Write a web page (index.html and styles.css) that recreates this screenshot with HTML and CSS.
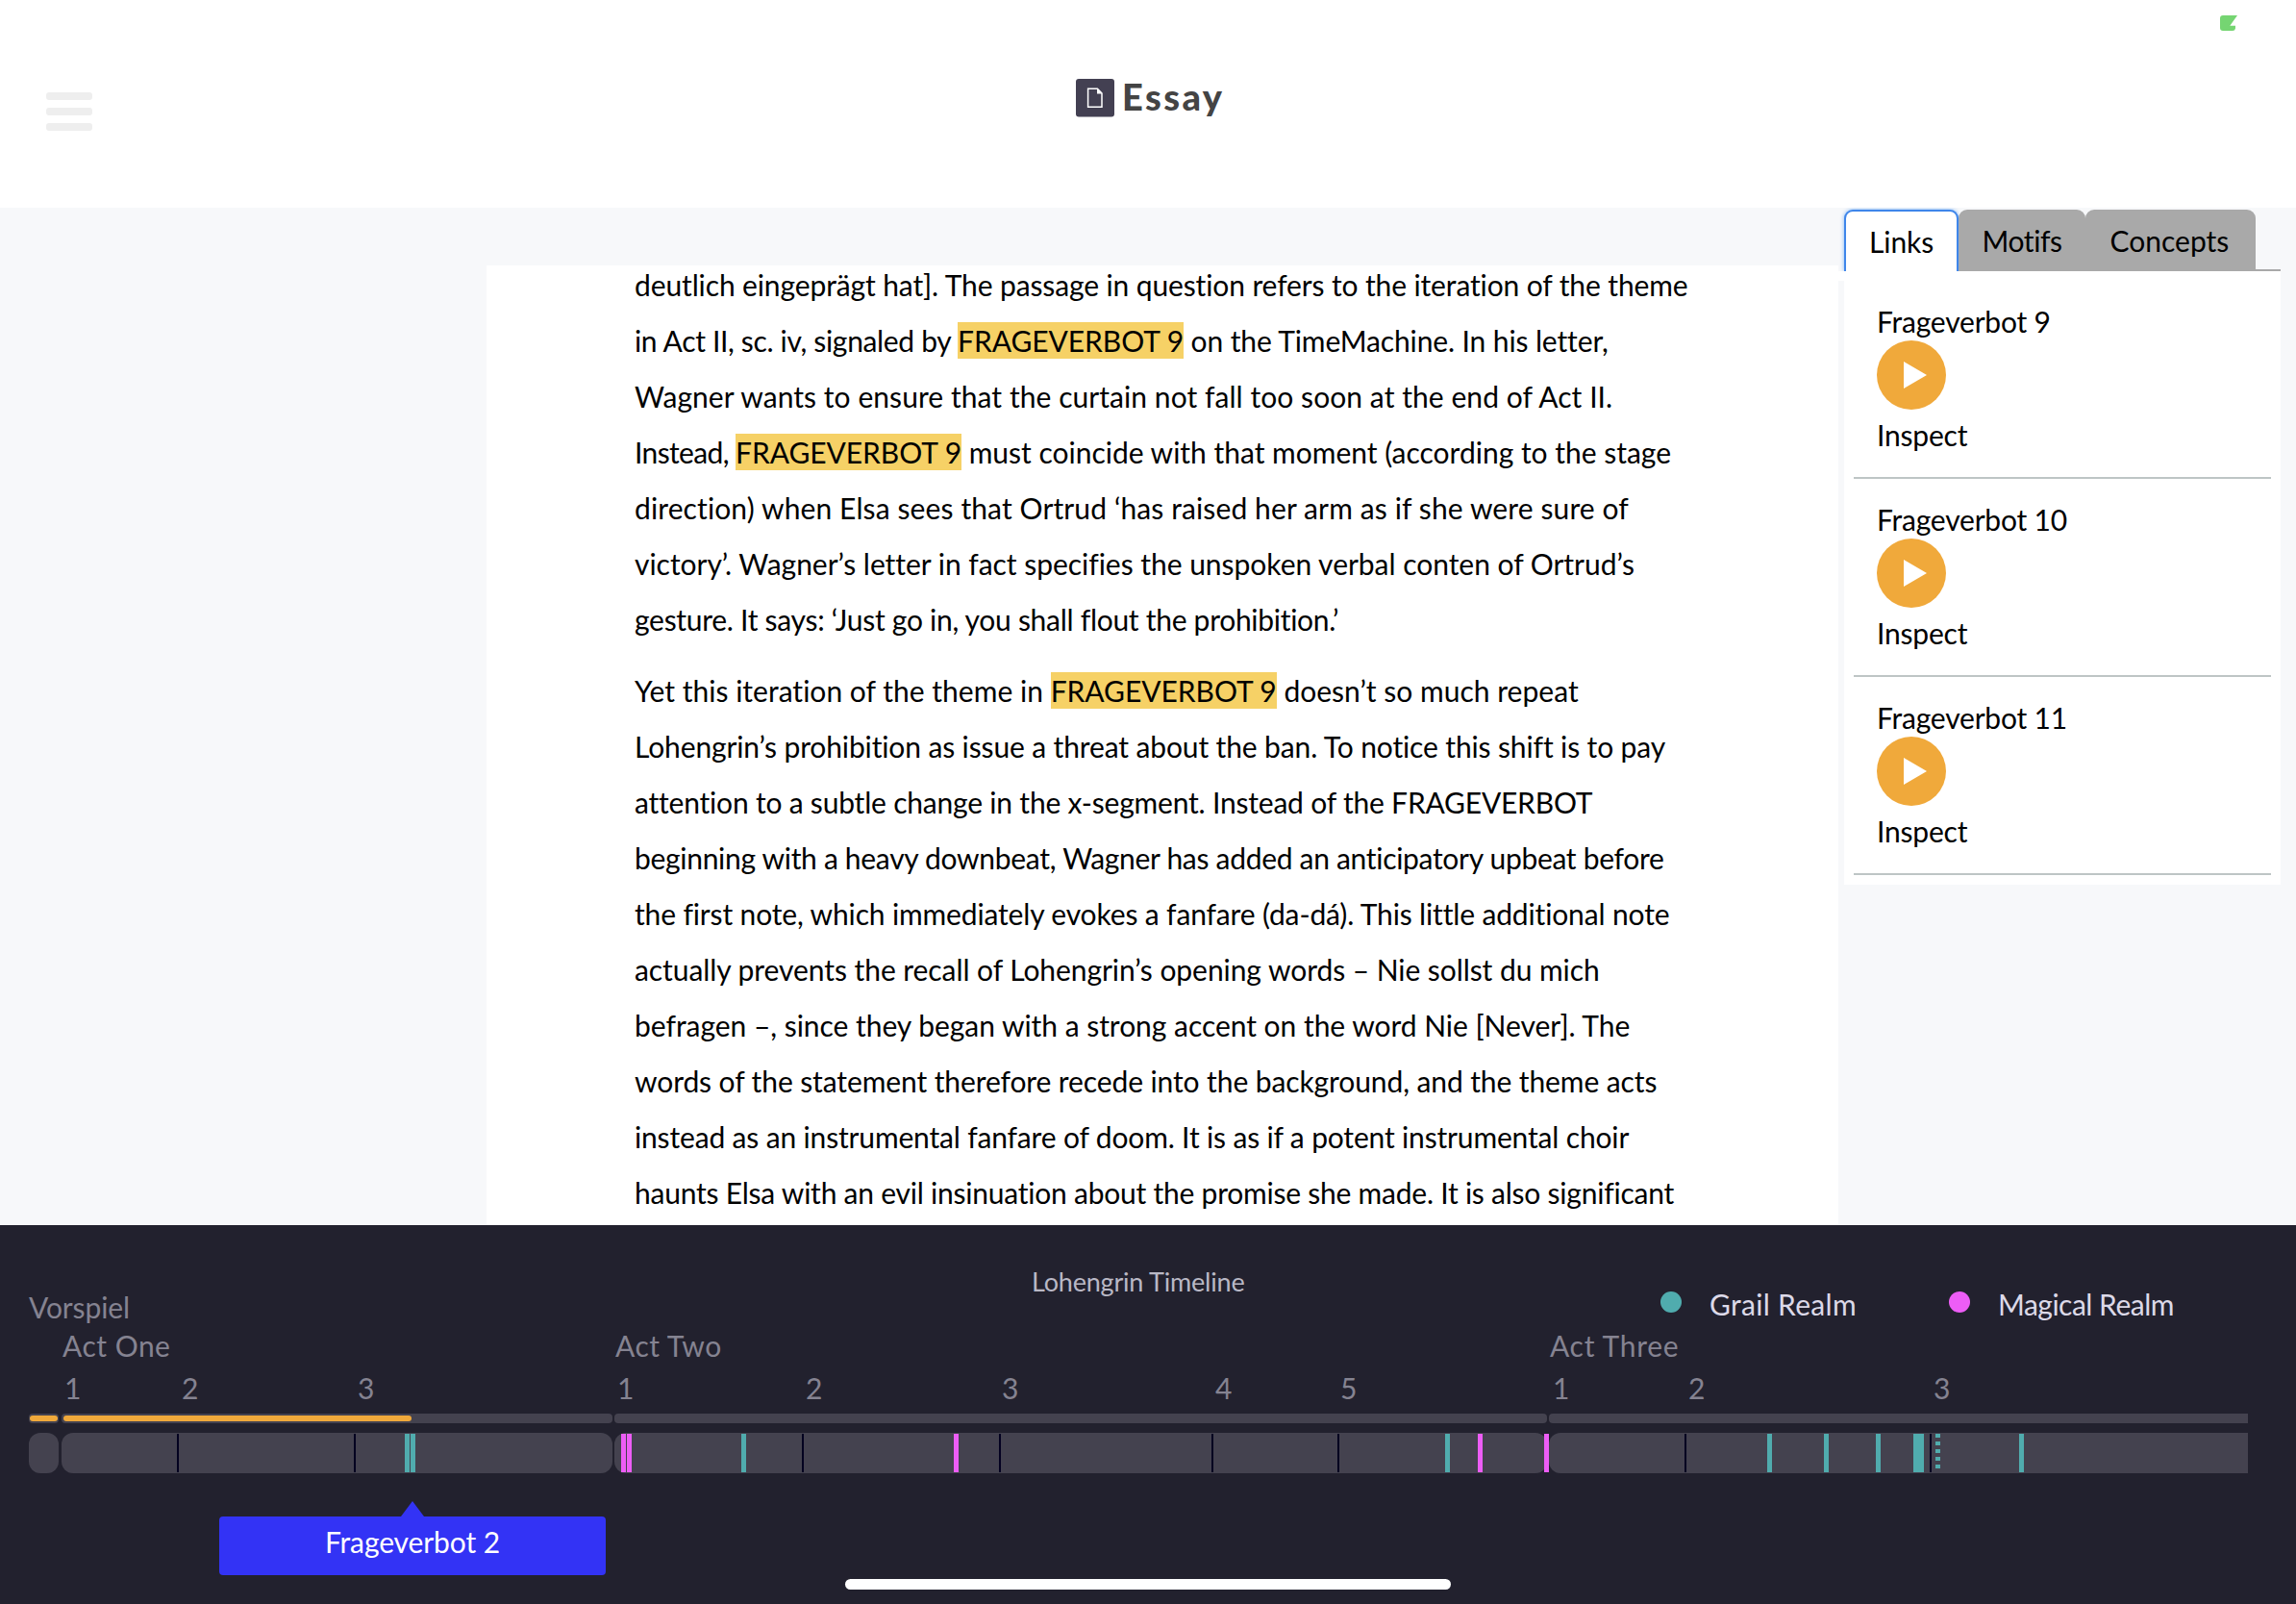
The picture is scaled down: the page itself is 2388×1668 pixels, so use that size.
FILE: index.html
```html
<!DOCTYPE html>
<html lang="en">
<head>
<meta charset="utf-8">
<title>Essay</title>
<link rel="stylesheet" href="styles.css">
</head>
<body>
<div class="app">
  <header class="topbar">
    <button class="menu" aria-label="Menu"><i></i><i></i><i></i></button>
    <h1 class="title">
      <svg class="doc" viewBox="0 0 40 40" width="40" height="40"><rect width="40" height="39.5" rx="3" fill="#434052"/><path d="M12.6 10.3H22.4L27 15V29.3H12.6Z" fill="none" stroke="#fff" stroke-width="1.5"/><path d="M22 10V15.4H27.4Z" fill="#fff"/></svg>
      <span>Essay</span>
    </h1>
    <svg class="battery" viewBox="0 0 18 16" width="18" height="16"><path d="M3 0H18L10.3 10.8H16V13.5Q15.5 16 13 16H3Q0 16 0 13V3Q0 0 3 0Z" fill="#75d572"/></svg>
  </header>

  <main class="content">
    <article class="paper">
      <p class="first">
        <span class="line">deutlich eingeprägt hat]. The passage in question refers to the iteration of the theme</span>
        <span class="line"><span>in Act II, sc. iv, signaled by </span><mark>FRAGEVERBOT 9</mark><span class="rest"> on the TimeMachine. In his letter,</span></span>
        <span class="line">Wagner wants to ensure that the curtain not fall too soon at the end of Act II.</span>
        <span class="line"><span>Instead, </span><mark>FRAGEVERBOT 9</mark><span class="rest"> must coincide with that moment (according to the stage</span></span>
        <span class="line">direction) when Elsa sees that Ortrud ‘has raised her arm as if she were sure of</span>
        <span class="line">victory’. Wagner’s letter in fact specifies the unspoken verbal conten of Ortrud’s</span>
        <span class="line">gesture. It says: ‘Just go in, you shall flout the prohibition.’</span>
      </p>
      <p class="second">
        <span class="line"><span>Yet this iteration of the theme in </span><mark>FRAGEVERBOT 9</mark><span class="rest"> doesn’t so much repeat</span></span>
        <span class="line">Lohengrin’s prohibition as issue a threat about the ban. To notice this shift is to pay</span>
        <span class="line">attention to a subtle change in the x-segment. Instead of the FRAGEVERBOT</span>
        <span class="line">beginning with a heavy downbeat, Wagner has added an anticipatory upbeat before</span>
        <span class="line">the first note, which immediately evokes a fanfare (da-dá). This little additional note</span>
        <span class="line">actually prevents the recall of Lohengrin’s opening words – Nie sollst du mich</span>
        <span class="line">befragen –, since they began with a strong accent on the word Nie [Never]. The</span>
        <span class="line">words of the statement therefore recede into the background, and the theme acts</span>
        <span class="line">instead as an instrumental fanfare of doom. It is as if a potent instrumental choir</span>
        <span class="line">haunts Elsa with an evil insinuation about the promise she made. It is also significant</span>
      </p>
    </article>

    <aside class="side">
      <nav class="tabs">
        <button class="tab active">Links</button>
        <button class="tab motifs">Motifs</button>
        <button class="tab concepts">Concepts</button>
      </nav>
      <div class="panel">
        <section class="item">
          <h2>Frageverbot 9</h2>
          <svg class="play" viewBox="0 0 72 72" width="72" height="72"><circle cx="36" cy="36" r="36" fill="#f0a93b"/><path d="M28 22V50L52 36Z" fill="#fff"/></svg>
          <a>Inspect</a>
        </section>
        <section class="item">
          <h2>Frageverbot 10</h2>
          <svg class="play" viewBox="0 0 72 72" width="72" height="72"><circle cx="36" cy="36" r="36" fill="#f0a93b"/><path d="M28 22V50L52 36Z" fill="#fff"/></svg>
          <a>Inspect</a>
        </section>
        <section class="item">
          <h2>Frageverbot 11</h2>
          <svg class="play" viewBox="0 0 72 72" width="72" height="72"><circle cx="36" cy="36" r="36" fill="#f0a93b"/><path d="M28 22V50L52 36Z" fill="#fff"/></svg>
          <a>Inspect</a>
        </section>
      </div>
    </aside>
  </main>

  <footer class="timeline">
    <div class="timeline-head">
      <span class="vorspiel">Vorspiel</span>
      <h3>Lohengrin Timeline</h3>
      <ul class="legend">
        <li class="grail">Grail Realm</li>
        <li class="magical">Magical Realm</li>
      </ul>
    </div>
    <div class="grid acts">
      <span></span><span>Act One</span><span>Act Two</span><span class="wide">Act Three</span>
    </div>
    <div class="scenes">
      <span style="left:67px">1</span><span style="left:189px">2</span><span style="left:372px">3</span>
      <span style="left:642px">1</span><span style="left:838px">2</span><span style="left:1042px">3</span><span style="left:1264px">4</span><span style="left:1394px">5</span>
      <span style="left:1615px">1</span><span style="left:1756px">2</span><span style="left:2011px">3</span>
    </div>
    <div class="grid progress">
      <span><b style="width:29px"></b></span><span><b style="width:362px"></b></span><span></span><span></span>
    </div>
    <div class="grid track">
      <span></span><span></span><span></span><span></span>
      <i class="cut" style="left:184px"></i><i class="cut" style="left:368px"></i>
      <i class="teal" style="left:421px"></i><i class="teal" style="left:426.5px"></i>
      <i class="pink" style="left:646px"></i><i class="pink" style="left:652px"></i>
      <i class="teal" style="left:770.5px"></i><i class="cut" style="left:834px"></i>
      <i class="pink" style="left:991.5px"></i><i class="cut" style="left:1039px"></i>
      <i class="cut" style="left:1260px"></i><i class="cut" style="left:1391px"></i>
      <i class="teal" style="left:1503px"></i><i class="pink" style="left:1537px"></i><i class="pink" style="left:1606px"></i>
      <i class="cut" style="left:1752px"></i>
      <i class="teal" style="left:1838px"></i><i class="teal" style="left:1896.5px"></i><i class="teal" style="left:1950.5px"></i>
      <i class="teal" style="left:1990px;width:11px"></i>
      <i class="cut" style="left:2007px"></i><i class="dots" style="left:2013px"></i>
      <i class="teal" style="left:2100px"></i>
    </div>
    <div class="tip">Frageverbot 2</div>
    <div class="home"></div>
  </footer>
</div>
</body>
</html>
```
FILE: styles.css
```css
* { box-sizing: border-box; }
body { margin: 0; font-family: "Gill Sans", Lato, sans-serif; font-size: 30px; line-height: 36px; font-variant-ligatures: none; color: #000; background: #f7f8fa; }
button { font: inherit; color: inherit; border: 0; padding: 0; background: none; }
h1, h2, h3, ul { margin: 0; padding: 0; font: inherit; list-style: none; }
.app { display: flex; flex-direction: column; width: 2388px; height: 1668px; overflow: hidden; }

/* Header */
.topbar { flex: none; display: flex; align-items: flex-start; height: 216px; background: #fff; }
.menu { display: flex; flex-direction: column; gap: 8px; margin: 96px 0 0 48px; }
.menu i { width: 48px; height: 8px; border-radius: 3px; background: #eee; }
.title { display: flex; gap: 8px; margin: 82px 0 0 1023px; font-size: 38px; line-height: 40px; font-weight: 900; letter-spacing: 2.4px; color: #444; }
.title span { margin-top: -2px; }
.battery { margin: 16px 61px 0 auto; }

/* Essay */
.content { flex: none; display: flex; align-items: flex-start; height: 1058px; overflow: hidden; }
.paper { flex: none; width: 1406px; height: 998px; margin: 60px 0 0 506px; padding-left: 154px; background: #fff; overflow: hidden; }
.paper p { margin: -9px 0 25px; }
.line { display: block; height: 58px; line-height: 58px; white-space: pre; }
mark { padding: 1px 0; background: #f6d166; color: inherit; letter-spacing: -0.04px; }

.first .line:nth-child(1) { letter-spacing: -0.12px; }
.first .line:nth-child(2) { letter-spacing: -0.336px; }
.first .line:nth-child(2) .rest { letter-spacing: -0.12px; }
.first .line:nth-child(3) { letter-spacing: 0.06px; }
.first .line:nth-child(4) { letter-spacing: -0.627px; }
.first .line:nth-child(4) .rest { letter-spacing: -0.01px; }
.first .line:nth-child(5) { letter-spacing: 0.112px; }
.first .line:nth-child(6) { letter-spacing: -0.03px; }
.first .line:nth-child(7) { letter-spacing: -0.283px; }
.second .line:nth-child(1) { letter-spacing: 0.02px; }
.second .line:nth-child(2) { letter-spacing: -0.128px; }
.second .line:nth-child(3) { letter-spacing: -0.2px; }
.second .line:nth-child(4) { letter-spacing: -0.305px; }
.second .line:nth-child(5) { letter-spacing: -0.144px; }
.second .line:nth-child(6) { letter-spacing: -0.065px; }
.second .line:nth-child(7) { letter-spacing: -0.035px; }
.second .line:nth-child(8) { letter-spacing: -0.1px; }
.second .line:nth-child(9) { letter-spacing: -0.16px; }
.second .line:nth-child(10) { letter-spacing: -0.23px; }
.paper .line mark { letter-spacing: -0.04px; }

/* Side panel */
.side { flex: none; width: 454px; margin: 2px 0 0 6px; }
.tabs { display: flex; height: 64px; border-bottom: 2px solid #a9a9a9; }
.tab { height: 64px; line-height: 64px; border-radius: 9px 9px 0 0; background: #a9a9a9; text-align: left; }
.active { width: 118.5px; padding-left: 24px; line-height: 60px; letter-spacing: -0.1px; border: 2px solid #3f86ea; border-bottom: 0; background: #fff; box-shadow: 0 0 4px #7db4f5; clip-path: inset(-6px -1px 0 -6px); }
.motifs { width: 132px; padding-left: 25px; letter-spacing: -0.4px; }
.concepts { width: 177.5px; padding-left: 26px; }
.panel { position: relative; padding: 10px; background: #fff; }
.panel::before { content: ""; position: absolute; left: -6px; top: 0; width: 6px; height: 10px; background: #fff; }
.item { display: flex; flex-direction: column; height: 206px; padding: 24px 0 0 24px; border-bottom: 2px solid #bec5c5; letter-spacing: -0.2px; }
.play { display: block; margin: 2px 0 8px; }

/* Timeline */
.timeline { position: relative; flex: none; height: 394px; background: #22212e; color: #858391; }
.timeline-head { display: flex; align-items: flex-start; height: 107px; }
.vorspiel { width: 1043px; margin: 67px 0 0 30px; letter-spacing: -0.1px; }
.timeline-head h3 { width: 654px; margin-top: 41px; font-size: 27px; letter-spacing: -0.2px; color: #b9b8c5; }
.legend { display: flex; margin-top: 64px; color: #dcd9e8; }
.legend li { display: flex; gap: 29px; width: 300px; white-space: nowrap; }
.legend li::before { content: ""; flex: none; width: 22px; height: 22px; margin-top: 5px; border-radius: 50%; background: #50acae; }
.legend .grail { letter-spacing: 0.3px; }
.legend .magical { letter-spacing: -0.5px; }
.legend .magical::before { background: #ed5df6; }
.grid { display: grid; grid-template-columns: 34px 575px 972px 727px; padding-left: 30px; }
.acts { height: 44px; letter-spacing: 0.5px; }
.acts span { padding-left: 1px; }
.acts .wide { letter-spacing: 0.7px; }
.scenes { position: relative; height: 45px; }
.scenes span { position: absolute; top: 0; }
.progress span { display: block; height: 10px; margin-right: 2px; padding: 2px 1px; border-radius: 4px; background: #44424f; }
.progress span:first-child, .track span:first-child { margin-right: 3px; }
.progress span:last-child { margin-right: 0; border-radius: 4px 0 0 4px; }
.progress b { display: block; height: 6px; border-radius: 3px; background: #f0a93b; }
.progress span + span b { margin-left: 1px; }
.track { position: relative; margin-top: 10px; }
.track span { height: 42px; margin-right: 2px; border-radius: 12px; background: #44424f; }
.track span:nth-child(4) { margin-right: 0; border-radius: 12px 0 0 12px; }
.track i { position: absolute; top: 1px; width: 5px; height: 40px; }
.track .cut { width: 2px; background: #030020; }
.teal { background: #50acae; }
.pink { background: #ed5df6; }
.dots { background: repeating-linear-gradient(#50acae 0 4px, transparent 4px 8px); }
.tip { position: absolute; left: 228px; top: 303px; width: 402px; height: 61px; line-height: 52px; border-radius: 4px; background: #3333f5; color: #fff; text-align: center; letter-spacing: -0.1px; }
.tip::before { content: ""; position: absolute; left: 189px; top: -16px; border: solid transparent; border-width: 0 12px 16px; border-bottom-color: #3333f5; }
.home { position: absolute; left: 879px; top: 368px; width: 630px; height: 11px; border-radius: 6px; background: #fff; }
```
